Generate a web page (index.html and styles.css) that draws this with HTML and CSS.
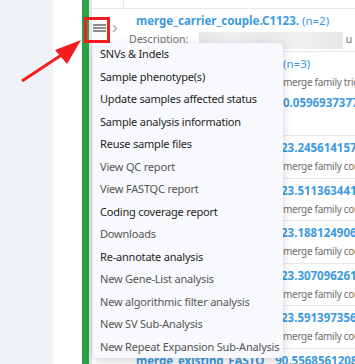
FILE: index.html
```html
<!DOCTYPE html>
<html lang="en">

<head>
    <meta charset="UTF-8" />
    <meta name="viewport" content="width=device-width, initial-scale=1.0" />
    <title>Analyses</title>
    <link rel="stylesheet" href="styles.css">
</head>

<body>
    <div class="page">
        <aside class="side"></aside>
        <div class="spacer"></div>
        <main class="panel">
            <div class="table">
                <div class="row row-top">
                    <div class="ctrl"></div>
                    <div class="cell"></div>
                </div>

                <div class="row row-head">
                    <div class="ctrl">
                        <button class="burger" aria-label="Actions">
                            <span></span><span></span><span></span>
                        </button>
                        <svg class="chevron" width="6" height="9" viewBox="0 0 6 9">
                            <path d="M1 1 L4.5 4.5 L1 8" fill="none" stroke="#b5b5b5" stroke-width="1.6" />
                        </svg>

                        <ul class="menu">
                            <li class="strong">SNVs &amp; Indels</li>
                            <li class="strong">Sample phenotype(s)</li>
                            <li class="strong">Update samples affected status</li>
                            <li class="strong">Sample analysis information</li>
                            <li class="strong">Reuse sample files</li>
                            <li>View QC report</li>
                            <li>View FASTQC report</li>
                            <li class="strong">Coding coverage report</li>
                            <li>Downloads</li>
                            <li class="strong">Re-annotate analysis</li>
                            <li>New Gene-List analysis</li>
                            <li>New algorithmic filter analysis</li>
                            <li>New SV Sub-Analysis</li>
                            <li>New Repeat Expansion Sub-Analysis</li>
                        </ul>
                    </div>
                    <div class="cell">
                        <div class="title">merge_carrier_couple.C1123. <span class="count">(n=2)</span></div>
                        <div class="desc">Description: <span class="blur"></span> u</div>
                    </div>
                </div>

                <div class="row row-tall">
                    <div class="ctrl"></div>
                    <div class="cell">
                        <div class="title"><span class="lead">merge_family_trio.C1124.</span><span class="count">(n=3)</span></div>
                        <div class="desc"><span class="lead">Description: </span>merge family trio</div>
                        <div class="title"><span class="lead">merge_trio_C1124_</span>0.0596937377</div>
                    </div>
                </div>

                <div class="row">
                    <div class="ctrl"></div>
                    <div class="cell">
                        <div class="title"><span class="lead lead-n">merge_couple_C1125_</span>23.245614157</div>
                        <div class="desc"><span class="lead">Description: </span>merge family couple</div>
                    </div>
                </div>
                <div class="row">
                    <div class="ctrl"></div>
                    <div class="cell">
                        <div class="title"><span class="lead lead-n">merge_couple_C1126_</span>23.511363441</div>
                        <div class="desc"><span class="lead">Description: </span>merge family couple</div>
                    </div>
                </div>
                <div class="row">
                    <div class="ctrl"></div>
                    <div class="cell">
                        <div class="title"><span class="lead lead-n">merge_couple_C1127_</span>23.188124906</div>
                        <div class="desc"><span class="lead">Description: </span>merge family couple</div>
                    </div>
                </div>
                <div class="row">
                    <div class="ctrl"></div>
                    <div class="cell">
                        <div class="title"><span class="lead lead-n">merge_couple_C1128_</span>23.307096261</div>
                        <div class="desc"><span class="lead">Description: </span>merge family couple</div>
                    </div>
                </div>
                <div class="row">
                    <div class="ctrl"></div>
                    <div class="cell">
                        <div class="title"><span class="lead lead-n">merge_couple_C1129_</span>23.591397356</div>
                        <div class="desc"><span class="lead">Description: </span>merge family couple</div>
                    </div>
                </div>
                <div class="row">
                    <div class="ctrl"></div>
                    <div class="cell">
                        <div class="title">merge_existing_FASTQ <span class="gap"></span>90.5568561208</div>
                    </div>
                </div>
            </div>
        </main>
    </div>

    <div class="mark"></div>
    <svg class="arrow" width="355" height="364" viewBox="0 0 355 364">
        <line x1="22" y1="81" x2="63" y2="54" stroke="#f41c1c" stroke-width="3" />
        <polygon points="81,40 55,50 67,64" fill="#f41c1c" />
    </svg>
</body>

</html>
```

FILE: styles.css
```css
* {
    box-sizing: border-box;
    margin: 0;
    padding: 0;
}

body {
    font-family: 'Noto Sans', sans-serif;
    background-color: #ffffff;
    color: #333;
    width: 355px;
    height: 364px;
    overflow: hidden;
    position: relative;
}

.page {
    display: flex;
    height: 364px;
    overflow: hidden;
}

.side {
    width: 53px;
    background-color: #eff3f8;
}

.spacer {
    width: 29px;
}

.panel {
    flex: 1;
    border-left: 7px solid #2aa24a;
    min-width: 0;
}

.table {
    border-left: 3px solid #e3e5e8;
}

.row {
    display: grid;
    grid-template-columns: 32px 1fr;
    height: 42.5px;
    border-bottom: 1px solid #e6e8eb;
}

.row-top {
    height: 9px;
}

.row-top .ctrl {
    border-right: 1px solid #e6e8eb;
}

.row-head {
    height: 43px;
}

.row-tall {
    height: 84px;
}

.ctrl {
    position: relative;
}

.cell {
    padding: 3px 0 0 12px;
    overflow: hidden;
    white-space: nowrap;
    min-width: 0;
}

.title {
    color: #3d9ade;
    font-weight: 700;
    font-size: 11.5px;
    line-height: 18px;
}

.count {
    font-weight: 400;
}

.desc {
    color: #6e6e6e;
    font-size: 10px;
    letter-spacing: -0.3px;
    line-height: 19px;
    margin-bottom: 2px;
}

.row-head .desc {
    margin-left: -7px;
    letter-spacing: 0;
    font-size: 10.5px;
}

.blur {
    display: inline-block;
    width: 144px;
    height: 17px;
    vertical-align: middle;
    margin-left: 8px;
    background: linear-gradient(90deg, #e6e6e6, #efefef 20%, #e8e8e8 45%, #f0f0f0 70%, #e7e7e7);
}

.lead {
    display: inline-block;
    width: 147px;
    overflow: hidden;
    vertical-align: top;
    visibility: hidden;
}

.lead-n {
    width: 145px;
}

.gap {
    display: inline-block;
    width: 8px;
}

.burger {
    position: absolute;
    left: 1px;
    top: 15px;
    width: 13px;
    height: 8px;
    border: none;
    background: none;
    display: flex;
    flex-direction: column;
    justify-content: space-between;
}

.burger span {
    display: block;
    height: 2px;
    background: #8c8c8c;
}

.chevron {
    position: absolute;
    left: 20px;
    top: 15px;
}

.menu {
    position: absolute;
    left: 1px;
    top: 34px;
    width: 190px;
    list-style: none;
    background-color: #f8f9fc;
    border-radius: 4px;
    box-shadow: 0 3px 10px rgba(0, 0, 0, 0.18);
    z-index: 5;
}

.menu li {
    font-size: 11px;
    letter-spacing: -0.2px;
    line-height: 22.5px;
    height: 22.5px;
    padding-left: 7px;
    color: #555;
    white-space: nowrap;
}

.menu li.strong {
    color: #1e1e1e;
}

.mark {
    position: absolute;
    left: 84px;
    top: 17px;
    width: 26px;
    height: 26px;
    border: 3px solid #f41c1c;
    z-index: 6;
}

.arrow {
    position: absolute;
    left: 0;
    top: 0;
    pointer-events: none;
    z-index: 7;
}
```
